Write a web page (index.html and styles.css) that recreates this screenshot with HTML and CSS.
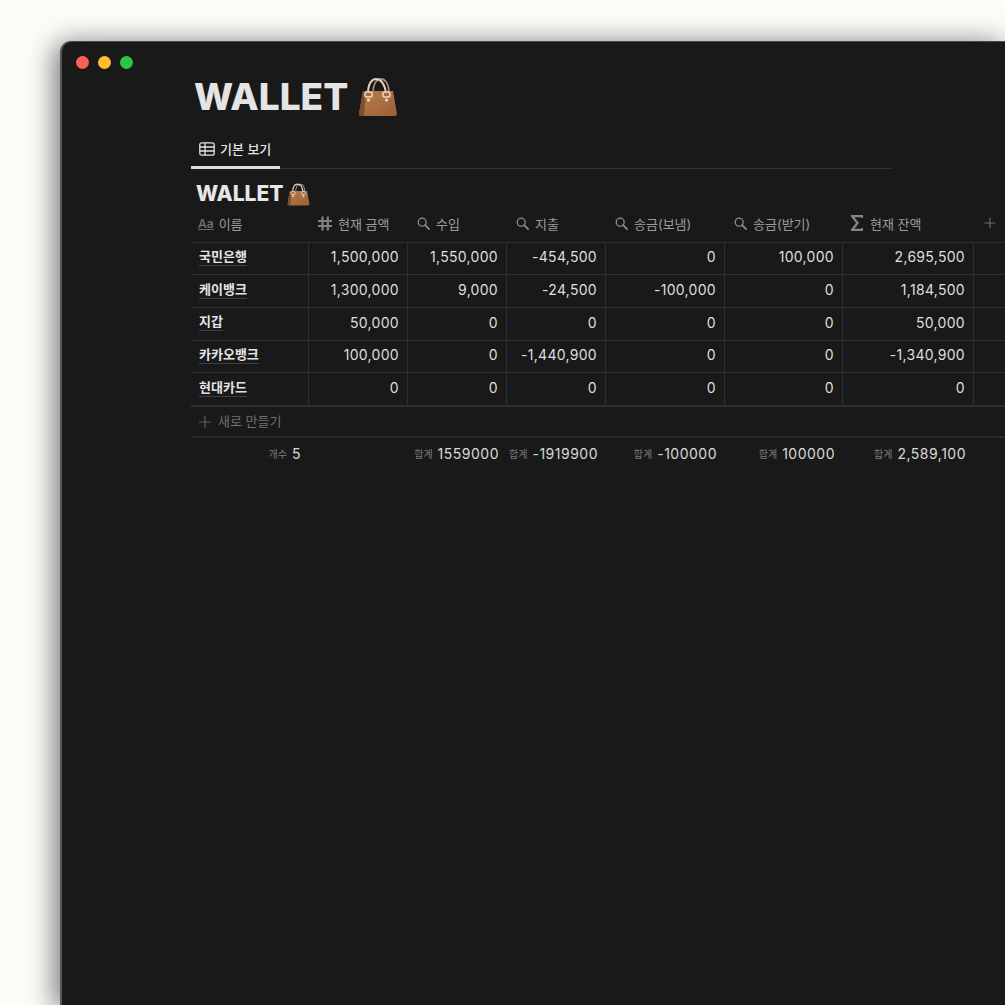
FILE: index.html
```html
<!DOCTYPE html>
<html lang="ko">
<head>
<meta charset="utf-8">
<title>WALLET</title>
<link rel="stylesheet" href="styles.css">
</head>
<body>
<svg class="defs" width="0" height="0" aria-hidden="true">
  <defs>
    <linearGradient id="leather" x1="0" y1="0" x2="1" y2="1">
      <stop offset="0" stop-color="#b97c4b"/>
      <stop offset="1" stop-color="#9a6136"/>
    </linearGradient>
    <symbol id="bag" viewBox="0 0 40 40">
      <path d="M15 17C15 6 19 2 23 2S31 6 31 17" fill="none" stroke="#a58c7a" stroke-width="1.800"/>
      <path d="M10 17C10 6 14 2 18 2S27 6 28 17" fill="none" stroke="#e3d2c4" stroke-width="2"/>
      <path d="M5 14H35L39 37Q39 39 36 39H4Q1 39 1 37Z" fill="url(#leather)"/>
      <path d="M5 14H8L6 39H4Q1 39 1 37Z" fill="#7f4e2c"/>
      <rect x="7" y="15" width="7" height="5" rx="1.500" fill="#a56c40" stroke="#eadbcf" stroke-width="1.500"/>
      <rect x="25" y="15" width="7" height="5" rx="1.500" fill="#a56c40" stroke="#eadbcf" stroke-width="1.500"/>
      <circle cx="10.500" cy="23" r="1.600" fill="#eadbcf"/>
      <circle cx="28.500" cy="23" r="1.600" fill="#eadbcf"/>
    </symbol>
    <symbol id="search" viewBox="0 0 14 14">
      <circle cx="5.600" cy="5.600" r="4.300" fill="none" stroke="currentColor" stroke-width="1.400"/>
      <path d="M8.800 8.800L13 13" stroke="currentColor" stroke-width="1.800" stroke-linecap="round"/>
    </symbol>
  </defs>
</svg>

<main class="window">
  <div class="lights">
    <span class="light light-red"></span>
    <span class="light light-yellow"></span>
    <span class="light light-green"></span>
  </div>

  <section class="page">
    <h1 class="title">WALLET <svg class="title-bag"><use href="#bag"/></svg></h1>

    <nav class="tabs">
      <div class="tab">
        <svg class="tab-icon" viewBox="0 0 16 14">
          <rect x="0.800" y="0.800" width="14.400" height="12.400" rx="2" fill="none" stroke="currentColor" stroke-width="1.300"/>
          <path d="M0.800 5H15.200M0.800 9H15.200M6 .8V13.200" fill="none" stroke="currentColor" stroke-width="1.300"/>
        </svg>
        <span>기본 보기</span>
      </div>
    </nav>

    <h2 class="subtitle">WALLET <svg class="sub-bag"><use href="#bag"/></svg></h2>
  </section>

  <section class="table">
    <div class="row head">
      <div class="hcell"><span class="aa">Aa</span>이름</div>
      <div class="hcell"><svg class="hash" viewBox="0 0 14 14"><path d="M4.500 0V14M9.800 0V14M0 4.500H14M0 9.500H14" fill="none" stroke="currentColor" stroke-width="2.200"/></svg>현재 금액</div>
      <div class="hcell"><svg class="lens"><use href="#search"/></svg>수입</div>
      <div class="hcell"><svg class="lens"><use href="#search"/></svg>지출</div>
      <div class="hcell"><svg class="lens"><use href="#search"/></svg>송금(보냄)</div>
      <div class="hcell"><svg class="lens"><use href="#search"/></svg>송금(받기)</div>
      <div class="hcell"><svg class="sigma" viewBox="0 0 12 16"><path d="M11.500 3V1H1L6.500 8 1 15H11.500V13" fill="none" stroke="currentColor" stroke-width="2.300"/></svg>현재 잔액</div>
      <div class="hcell add"><svg class="plus" viewBox="0 0 12 12"><path d="M6 .5V11.500M.5 6H11.500" stroke="currentColor" stroke-width="1.100"/></svg></div>
    </div>

    <div class="row body-row">
      <div class="cell name"><span>국민은행</span></div>
      <div class="cell">1,500,000</div><div class="cell">1,550,000</div><div class="cell">-454,500</div><div class="cell">0</div><div class="cell">100,000</div><div class="cell">2,695,500</div><div class="cell"></div>
    </div>
    <div class="row body-row">
      <div class="cell name"><span>케이뱅크</span></div>
      <div class="cell">1,300,000</div><div class="cell">9,000</div><div class="cell">-24,500</div><div class="cell">-100,000</div><div class="cell">0</div><div class="cell">1,184,500</div><div class="cell"></div>
    </div>
    <div class="row body-row">
      <div class="cell name"><span>지갑</span></div>
      <div class="cell">50,000</div><div class="cell">0</div><div class="cell">0</div><div class="cell">0</div><div class="cell">0</div><div class="cell">50,000</div><div class="cell"></div>
    </div>
    <div class="row body-row">
      <div class="cell name"><span>카카오뱅크</span></div>
      <div class="cell">100,000</div><div class="cell">0</div><div class="cell">-1,440,900</div><div class="cell">0</div><div class="cell">0</div><div class="cell">-1,340,900</div><div class="cell"></div>
    </div>
    <div class="row body-row last-row">
      <div class="cell name"><span>현대카드</span></div>
      <div class="cell">0</div><div class="cell">0</div><div class="cell">0</div><div class="cell">0</div><div class="cell">0</div><div class="cell">0</div><div class="cell"></div>
    </div>

    <div class="new-row"><svg class="new-plus" viewBox="0 0 12 12"><path d="M6 0V12M0 6H12" stroke="currentColor" stroke-width="1.200"/></svg>새로 만들기</div>

    <div class="row foot">
      <div class="fcell"><small>개수</small>5</div>
      <div class="fcell"></div>
      <div class="fcell"><small>합계</small>1559000</div>
      <div class="fcell"><small>합계</small>-1919900</div>
      <div class="fcell"><small>합계</small>-100000</div>
      <div class="fcell"><small>합계</small>100000</div>
      <div class="fcell"><small>합계</small>2,589,100</div>
      <div class="fcell"></div>
    </div>
  </section>
</main>
</body>
</html>
```

FILE: styles.css
```css
* { box-sizing: border-box; }

html, body {
  height: 100%;
  overflow: hidden;
}

body {
  margin: 0;
  padding: 41px 0 0 60px;
  background: #fbfcf8;
  font-family: Inter, "Noto Sans CJK KR", sans-serif;
}

.defs { position: absolute; }

.window {
  width: 945px;
  height: 964px;
  background: #191919;
  border-top: 1px solid #4a4a4a;
  border-left: 2px solid #565656;
  border-radius: 11px 0 0 0;
  box-shadow: -6px 4px 26px rgba(0, 0, 0, 0.42), 0 0 30px rgba(0, 0, 0, 0.18);
  color: #e6e6e6;
}

.lights {
  display: flex;
  gap: 9px;
  padding: 14px 0 0 14px;
  height: 34px;
}

.light {
  width: 13px;
  height: 13px;
  border-radius: 50%;
}
.light-red { background: #fe5f57; }
.light-yellow { background: #febc2e; }
.light-green { background: #28c840; }

.page {
  margin-left: 129px;
  width: 700px;
}

.title {
  margin: 0;
  padding-left: 3px;
  height: 42px;
  font-size: 37px;
  line-height: 42px;
  font-weight: 800;
  color: #e4e4e4;
  white-space: nowrap;
  display: flex;
  align-items: center;
  gap: 10px;
}

.title-bag {
  width: 40px;
  height: 40px;
}

.tabs {
  margin-top: 15px;
  border-bottom: 1px solid #373737;
  height: 36px;
}

.tab {
  width: 89px;
  height: 36px;
  border-bottom: 3px solid #dedede;
  display: flex;
  align-items: center;
  gap: 5px;
  padding: 0 0 2px 8px;
  font-size: 13px;
  font-weight: 500;
  color: #e3e3e3;
}

.tab-icon {
  width: 16px;
  height: 14px;
}

.subtitle {
  margin: 10px 0 0;
  padding-left: 5px;
  height: 30px;
  font-size: 21px;
  line-height: 30px;
  font-weight: 800;
  color: #e6e6e6;
  display: flex;
  align-items: center;
  gap: 3px;
  white-space: nowrap;
}

.sub-bag {
  width: 23px;
  height: 23px;
}

.table {
  margin-left: 129px;
  margin-top: -1px;
}

.row {
  display: grid;
  grid-template-columns: 118px 99px 99px 99px 119px 118px 131px 31px;
}

.head {
  height: 34.500px;
  border-bottom: 1px solid #2e2e2e;
  padding-bottom: 3px;
}

.hcell {
  display: flex;
  align-items: center;
  padding-left: 7px;
  gap: 5px;
  font-size: 13px;
  color: #9b9b9b;
  white-space: nowrap;
}

.aa {
  font-size: 12px;
  font-weight: 600;
  color: #6d6d6d;
  text-decoration: underline;
  text-underline-offset: 1px;
}

.hash { width: 14px; height: 15px; color: #808080; margin-left: 2px; margin-right: 1px; }
.lens { width: 13px; height: 13px; color: #8f8f8f; margin-left: 2px; margin-right: 1px; }
.sigma { width: 12px; height: 16px; color: #858585; margin-left: 1px; margin-right: 2px; }

.add { padding-left: 10px; }
.plus { width: 12px; height: 12px; color: #6f6f6f; }

.body-row {
  height: 32.700px;
  border-bottom: 1px solid #2f2f2f;
}

.last-row {
  height: 34px;
  border-bottom: 2px solid #2f2f2f;
}

.cell {
  display: flex;
  align-items: center;
  justify-content: flex-end;
  padding: 0 8px 3px 0;
  font-size: 14px;
  letter-spacing: 0.3px;
  color: #dfdfdf;
  border-right: 1px solid #2f2f2f;
}

.cell:last-child { border-right: 0; }

.name {
  justify-content: flex-start;
  padding-left: 8px;
  font-weight: 700;
  font-size: 13px;
  letter-spacing: 0;
  color: #e3e3e3;
}

.name span {
  border-bottom: 1px solid #3f3f3f;
  line-height: 17px;
}

.new-row {
  height: 31px;
  border-bottom: 2px solid #2b2b2b;
  display: flex;
  align-items: center;
  gap: 7px;
  padding: 0 0 3px 8px;
  font-size: 13px;
  color: #707070;
}

.new-plus { width: 12px; height: 12px; color: #5f5f5f; margin-top: 3px; }

.foot {
  height: 34px;
  padding-bottom: 3px;
}

.fcell {
  display: flex;
  align-items: center;
  justify-content: flex-end;
  gap: 5px;
  padding-right: 8px;
  font-size: 14px;
  letter-spacing: 0.5px;
  color: #d9d9d9;
  white-space: nowrap;
}

.fcell small {
  font-size: 10px;
  letter-spacing: 0;
  color: #7b7b7b;
}
```
